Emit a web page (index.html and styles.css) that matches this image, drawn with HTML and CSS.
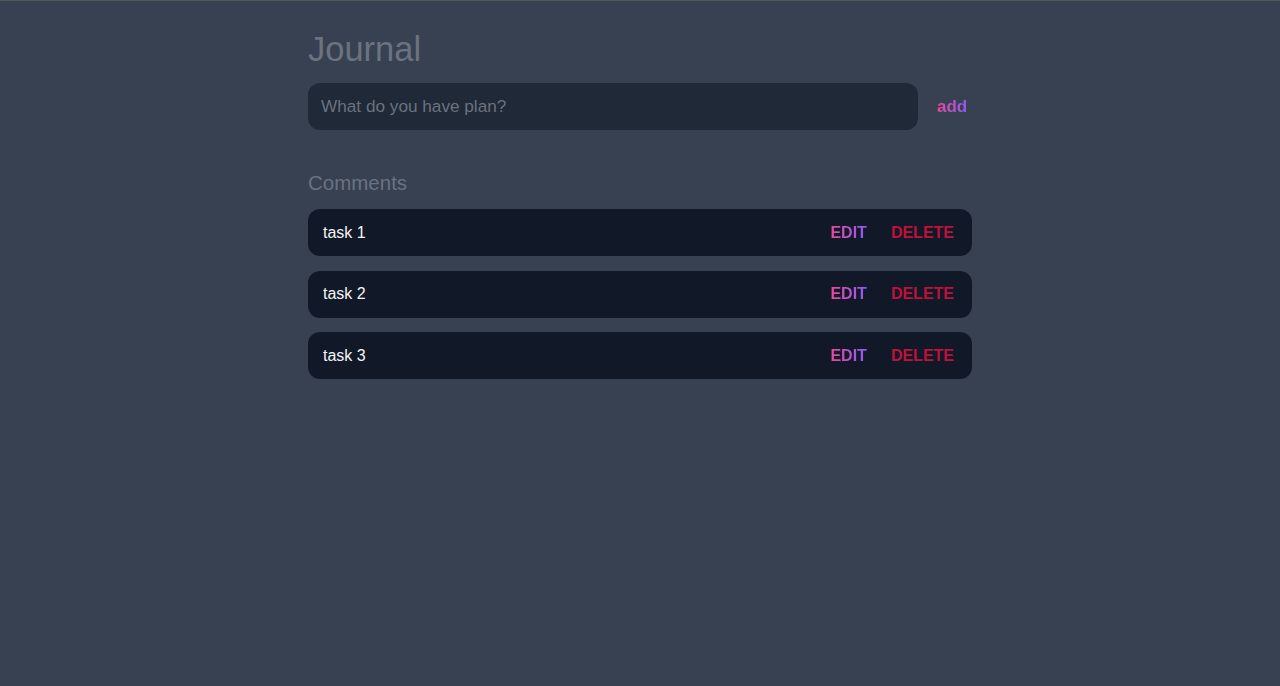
FILE: index.html
```html
<!DOCTYPE html>
<html lang="en">
<head>
<meta charset="utf-8">
<title>Journal</title>
<link rel="stylesheet" href="styles.css">
</head>
<body>
<main class="app">
  <h1 class="title">Journal</h1>
  <form class="entry">
    <input class="entry-input" type="text" placeholder="What do you have plan?">
    <button class="add-btn" type="button">add</button>
  </form>
  <h2 class="section-title">Comments</h2>
  <ul class="tasks">
    <li class="task"><span class="task-name">task 1</span><span class="actions"><button class="btn edit">EDIT</button><button class="btn delete">DELETE</button></span></li>
    <li class="task"><span class="task-name">task 2</span><span class="actions"><button class="btn edit">EDIT</button><button class="btn delete">DELETE</button></span></li>
    <li class="task"><span class="task-name">task 3</span><span class="actions"><button class="btn edit">EDIT</button><button class="btn delete">DELETE</button></span></li>
  </ul>
</main>
</body>
</html>
```
FILE: styles.css
```css
* { box-sizing: border-box; }
html, body { height: 100%; }
body {
  margin: 0;
  background: #374151;
  border-top: 1px solid #4d5a58;
  font-family: "Liberation Sans", Arial, sans-serif;
}
.app {
  width: 664px;
  margin: 0 auto;
  padding-top: 28px;
}
.title {
  margin: 0;
  font-size: 34.5px;
  line-height: 40px;
  font-weight: 400;
  color: #6b7280;
}
.entry {
  display: flex;
  align-items: center;
  margin-top: 14px;
}
.entry-input {
  width: 610px;
  height: 47px;
  border: none;
  outline: none;
  border-radius: 12px;
  background: #1f2937;
  padding: 0 13px;
  font-family: inherit;
  font-size: 17.2px;
  color: #d1d5db;
}
.entry-input::placeholder { color: #6b7280; }
.add-btn {
  margin-left: 19px;
  padding: 0;
  border: none;
  background: linear-gradient(90deg, #ec4899, #8b5cf6);
  -webkit-background-clip: text;
  background-clip: text;
  color: transparent;
  font-family: inherit;
  font-size: 17px;
  font-weight: 700;
  cursor: pointer;
}
.section-title {
  margin: 39px 0 12px;
  font-size: 20.5px;
  line-height: 28px;
  font-weight: 400;
  color: #6b7280;
}
.tasks {
  list-style: none;
  margin: 0;
  padding: 0;
  display: flex;
  flex-direction: column;
  gap: 14.5px;
}
.task {
  display: flex;
  align-items: center;
  justify-content: space-between;
  height: 47px;
  padding: 0 18px 0 15px;
  border-radius: 12px;
  background: #111827;
}
.task-name {
  font-size: 16px;
  color: #f3f4f6;
}
.actions {
  display: flex;
  gap: 24px;
}
.btn {
  padding: 0;
  border: none;
  background: none;
  font-family: inherit;
  font-size: 16px;
  font-weight: 700;
  cursor: pointer;
}
.edit {
  background: linear-gradient(90deg, #ec4899, #8b5cf6);
  -webkit-background-clip: text;
  background-clip: text;
  color: transparent;
}
.delete { color: #be123c; }
```
